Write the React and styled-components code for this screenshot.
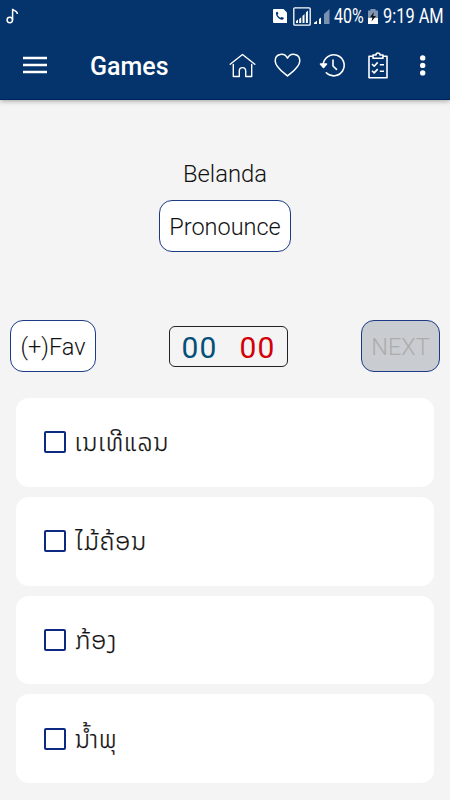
import React, { useState } from 'react'
import styled, { createGlobalStyle } from 'styled-components'


const GlobalStyle = createGlobalStyle`
    * {
        box-sizing: border-box;
    }
    body {
        margin: 0;
        background-color: #f4f4f4;
        font-family: Roboto, 'DejaVu Sans', sans-serif;
        overflow: hidden;
    }
    button {
        font-family: inherit;
        padding: 0;
    }
`
const Screen = styled.div`
    width: 450px;
    height: 800px;
    overflow: hidden;
`
const Header = styled.header`
    height: 100px;
    color: white;
    background-color: #05336b;
    border-bottom: 1px solid #01235a;
    box-shadow: 0 1px 5px rgba(0, 0, 0, 0.35);
`
const StatusBar = styled.div`
    display: flex;
    align-items: center;
    height: 32px;
    padding: 0 6px;
    svg {
        display: block;
        flex: none;
    }
`
const StatusIcons = styled.div`
    display: flex;
    align-items: center;
    margin-left: auto;
`
const StatusText = styled.span`
    display: inline-block;
    width: ${props => props.$width}px;
    font-size: 19.5px;
    line-height: 32px;
    padding-top: 1px;
    white-space: nowrap;
    transform: scaleX(${props => props.$scale});
    transform-origin: left center;
`
const Toolbar = styled.div`
    display: flex;
    align-items: center;
    height: 67px;
    padding-left: 23px;
`
const IconButton = styled.button`
    display: flex;
    justify-content: center;
    width: ${props => props.$width || 45}px;
    border: 0;
    color: white;
    background: none;
    svg {
        display: block;
    }
`
const Title = styled.h1`
    width: 130px;
    margin: 0 0 0 43px;
    padding-top: 2px;
    font-size: 25px;
    font-weight: 500;
    line-height: 30px;
`
const Question = styled.section`
    display: flex;
    flex-direction: column;
    align-items: center;
    height: 220px;
    padding-top: 59px;
`
const Word = styled.p`
    margin: 0 0 11px;
    color: #111;
    font-size: 23.8px;
    font-weight: 300;
    line-height: 30px;
`
const Button = styled.button`
    width: ${props => props.$width}px;
    height: 52px;
    padding-top: 2px;
    border: 1px solid #1c3a86;
    border-radius: 13px;
    color: #111;
    background-color: white;
    font-size: 23.5px;
    font-weight: 300;
    white-space: nowrap;
    &:disabled {
        color: #acacac;
        background-color: #c9ccd1;
    }
`
const Controls = styled.section`
    display: flex;
    align-items: center;
    justify-content: space-between;
    height: 52px;
    margin: 0 10px;
`
const Counter = styled.div`
    display: flex;
    justify-content: space-between;
    width: 119px;
    height: 41px;
    margin: 0 1px 0 0;
    padding: 0 11px 0 12px;
    border: 1.4px solid #222;
    border-radius: 6px;
    font-size: 30px;
    line-height: 41px;
    letter-spacing: 1.2px;
`
const Score = styled.span`
    color: ${props => props.$color};
`
const Answers = styled.ul`
    display: flex;
    flex-direction: column;
    gap: 10px;
    margin: 26px 16px 0;
    padding: 0;
    list-style: none;
`
const Answer = styled.li`
    display: flex;
    align-items: center;
    height: 88.8px;
    padding-left: 28px;
    border-radius: 13px;
    background-color: white;
    cursor: pointer;
`
const Checkbox = styled.span`
    flex: none;
    width: 22px;
    height: 22px;
    margin-right: 9px;
    border: 2px solid #0b2a80;
    border-radius: 2px;
    background-color: ${props => (props.$checked ? '#0b2a80' : 'transparent')};
`
const AnswerText = styled.span`
    color: #111;
    font-family: 'Noto Sans Lao', 'DejaVu Sans', sans-serif;
    font-size: 24.5px;
    font-weight: 300;
    line-height: 36px;
    letter-spacing: 1px;
    white-space: nowrap;
    -webkit-text-stroke: 0.25px #111;
`

const answers = ['ເນເທີແລນ', 'ໄມ້ຄ້ອນ', 'ກ້ອງ', 'ນ້ຳພຸ']

function NoteIcon() {
    return (
    <svg width="13" height="17" viewBox="0 0 13 17" fill="none" stroke="white" strokeWidth="1.5">
        <circle cx="3.8" cy="12" r="2.7" />
        <path d="M6.6 12V.8c.5 2.2 4.8 1.5 4.8 5.2" />
    </svg>
  )
}

function CallIcon() {
    return (
    <svg width="14" height="16" viewBox="0 0 14 16">
        <path d="M1 1h9.5L14 4.4V15H1a1 1 0 0 1-1-1V2a1 1 0 0 1 1-1Z" fill="white" />
        <path d="M3 4.5c.8-1 1.6-.8 2 0l.3 1.2-.8 1c.7 1.5 1.6 2.4 3 3l1-.8 1.8.7c.8.6.6 1.4-.3 2C6.8 12.6 2.4 8.2 3 4.5Z" fill="#05336b" />
    </svg>
  )
}

function SignalBoxIcon() {
    return (
    <svg width="18" height="19" viewBox="0 0 18 19">
        <rect x=".8" y=".8" width="16.4" height="17.4" rx="1" fill="none" stroke="white" strokeWidth="1.3" />
        <path d="M3 16v-2l2-1.5V16ZM6.2 16v-4l2-1.7V16ZM9.5 16V9l2-2V16ZM12.9 16V5.5l2-2V16Z" fill="white" />
    </svg>
  )
}

function SignalIcon() {
    return (
    <svg width="16" height="15" viewBox="0 0 16 15">
        <path d="M0 15v-1.2L3 11.8V15ZM5 15v-5l2-1.5V15Z" fill="white" />
        <path d="M10 15V5l5.5-5v15Z" fill="#7991b1" />
    </svg>
  )
}

function BatteryIcon() {
    return (
    <svg width="10" height="15" viewBox="0 0 10 15">
        <path d="M2.5 0h5v1.5H10V9H0V1.5h2.5Z" fill="#8096b3" />
        <path d="M0 9h10v6H0Z" fill="white" />
        <path d="M5.8 3 2 8.3h2.5L3.5 12.5 8 7H5.2Z" fill="#111" />
    </svg>
  )
}

function MenuIcon() {
    return (
    <svg width="24" height="20" viewBox="0 0 24 20" fill="none" stroke="currentColor" strokeWidth="2.5">
        <path d="M0 2h24M0 9h24M0 16h24" />
    </svg>
  )
}

function HomeIcon() {
    return (
    <svg width="27" height="26" viewBox="0 0 27 26" fill="none" stroke="currentColor" strokeWidth="1.4" strokeLinecap="round" strokeLinejoin="round">
        <path d="M1.2 11.3 13.5 1.5l12.3 9.8M4.3 11.4V23.5h6v-5.7a3.2 3.2 0 0 1 6.4 0v5.7h6V11.4" />
    </svg>
  )
}

function HeartIcon() {
    return (
    <svg width="27" height="26" viewBox="0 0 27 26" fill="none" stroke="currentColor" strokeWidth="1.5" strokeLinejoin="round">
        <path d="M13.5 23C10 19.8 1.2 14.1 1.2 7.9 1.2.6 10.3-1 13.5 5.2 16.7-1 25.8.6 25.8 7.9c0 6.2-8.8 11.9-12.3 15.1Z" />
    </svg>
  )
}

function HistoryIcon() {
    return (
    <svg width="27" height="26" viewBox="0 0 27 26" fill="none" stroke="currentColor" strokeWidth="1.6" strokeLinecap="round" strokeLinejoin="round">
        <path d="M4.2 11.5a10.5 10.5 0 1 1 3.1 8.3M14 7v6l3.5 3.3" />
        <path d="M1.5 11h6l-3 3.5Z" fill="currentColor" />
    </svg>
  )
}

function TasksIcon() {
    return (
    <svg width="20" height="28" viewBox="0 0 20 28" fill="none" stroke="currentColor" strokeWidth="1.6" strokeLinejoin="round">
        <path d="M5 4.2H1v21.5h18V4.2h-4" />
        <path d="M5 6.3V3h3a2 2 0 0 1 4 0h3v3.3Z" />
        <path d="m4 12 2.2 2.2 3.5-3.8M4 18.7l2.2 2.2 3.5-3.8M11.8 12.7H16M11.8 19.2H16" />
    </svg>
  )
}

function MoreIcon() {
    return (
    <svg width="6" height="22" viewBox="0 0 6 22" fill="currentColor">
        <circle cx="2.7" cy="2.9" r="2.7" />
        <circle cx="2.7" cy="10.4" r="2.7" />
        <circle cx="2.7" cy="17.9" r="2.7" />
    </svg>
  )
}

const Gap = styled.span`
    width: ${props => props.$size}px;
`

function App() {
    const [selected, setSelected] = useState(null)

    return (
    <Screen>
        <GlobalStyle />
        <Header>
            <StatusBar>
                <NoteIcon />
                <StatusIcons>
                    <CallIcon />
                    <Gap $size={6} />
                    <SignalBoxIcon />
                    <Gap $size={3} />
                    <SignalIcon />
                    <Gap $size={4} />
                    <StatusText $width={34} $scale={0.82}>40%</StatusText>
                    <BatteryIcon />
                    <Gap $size={5} />
                    <StatusText $width={61} $scale={0.84}>9:19 AM</StatusText>
                </StatusIcons>
            </StatusBar>
            <Toolbar>
                <IconButton $width={24} aria-label="Menu"><MenuIcon /></IconButton>
                <Title>Games</Title>
                <IconButton aria-label="Home"><HomeIcon /></IconButton>
                <IconButton aria-label="Favourites"><HeartIcon /></IconButton>
                <IconButton aria-label="History"><HistoryIcon /></IconButton>
                <IconButton aria-label="Tasks"><TasksIcon /></IconButton>
                <IconButton aria-label="More"><MoreIcon /></IconButton>
            </Toolbar>
        </Header>
        <Question>
            <Word>Belanda</Word>
            <Button $width={132}>Pronounce</Button>
        </Question>
        <Controls>
            <Button $width={86}>(+)Fav</Button>
            <Counter>
                <Score $color="#045078">00</Score>
                <Score $color="#d20007">00</Score>
            </Counter>
            <Button $width={79} disabled>NEXT</Button>
        </Controls>
        <Answers>
            {answers.map((answer, index) => (
                <Answer key={answer} onClick={() => setSelected(index)}>
                    <Checkbox $checked={selected === index} />
                    <AnswerText>{ answer }</AnswerText>
                </Answer>
            ))}
        </Answers>
    </Screen>
  )
}

export default App
